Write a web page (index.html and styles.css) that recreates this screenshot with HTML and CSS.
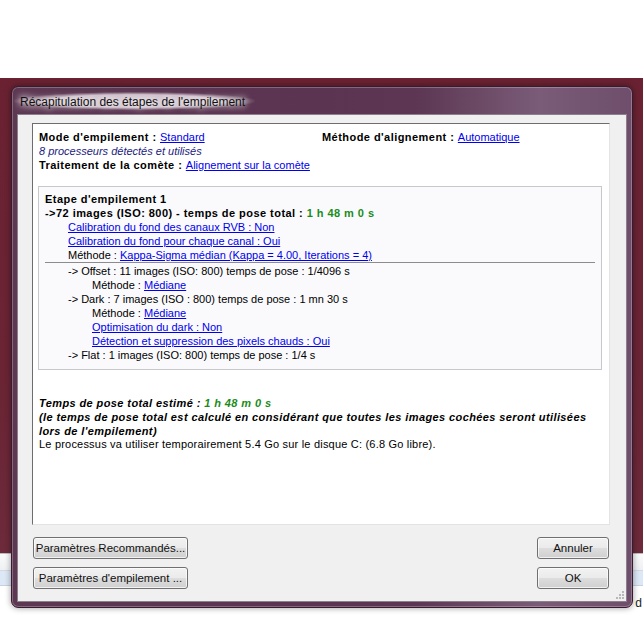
FILE: index.html
```html
<!DOCTYPE html>
<html lang="fr">
<head>
<meta charset="UTF-8" />
<title>Récapitulation des étapes de l'empilement</title>
<link rel="stylesheet" href="styles.css">
</head>
<body>
  <div class="desk">
    <div class="desk-top"></div>
    <div class="desk-maroon"></div>
    <div class="desk-app">
      <div class="app-line"></div>
      <div class="app-row"></div>
      <div class="app-blue"></div>
      <div class="app-row2"><span class="app-d">d</span></div>
    </div>
  </div>

  <div class="window" role="dialog" aria-label="Récapitulation des étapes de l'empilement">
    <div class="titlebar"><span class="title-text">Récapitulation des étapes de l'empilement</span></div>
    <div class="client">
      <div class="panel">
        <div class="head">
          <div><b>Mode d'empilement : </b><a href="#">Standard</a></div>
          <div><b>Méthode d'alignement : </b><a href="#">Automatique</a></div>
        </div>
        <div class="cpu">8 processeurs détectés et utilisés</div>
        <div><b>Traitement de la comète : </b><a href="#">Alignement sur la comète</a></div>

        <div class="stage">
          <div><b>Etape d'empilement 1</b></div>
          <div><b>-&gt;72 images (ISO: 800) - temps de pose total : <span class="green">1 h 48 m 0 s</span></b></div>
          <div class="lvl1"><a href="#">Calibration du fond des canaux RVB : Non</a></div>
          <div class="lvl1"><a href="#">Calibration du fond pour chaque canal : Oui</a></div>
          <div class="lvl1">Méthode : <a href="#">Kappa-Sigma médian (Kappa = 4.00, Iterations = 4)</a></div>
          <div class="sep"></div>
          <div class="lvl1">-&gt; Offset : 11 images (ISO: 800) temps de pose : 1/4096 s</div>
          <div class="lvl2">Méthode : <a href="#">Médiane</a></div>
          <div class="lvl1">-&gt; Dark : 7 images (ISO : 800) temps de pose : 1 mn 30 s</div>
          <div class="lvl2">Méthode : <a href="#">Médiane</a></div>
          <div class="lvl2"><a href="#">Optimisation du dark : Non</a></div>
          <div class="lvl2"><a href="#">Détection et suppression des pixels chauds : Oui</a></div>
          <div class="lvl1">-&gt; Flat : 1 images (ISO: 800) temps de pose : 1/4 s</div>
        </div>

        <div class="total">
          <div>Temps de pose total estimé : <span class="green">1 h 48 m 0 s</span></div>
          <div>(le temps de pose total est calculé en considérant que toutes les images cochées seront utilisées</div>
          <div>lors de l'empilement)</div>
        </div>
        <div class="disk">Le processus va utiliser temporairement 5.4 Go sur le disque C: (6.8 Go libre).</div>
      </div>

      <div class="buttons">
        <div class="btn-col">
          <button class="btn btn-wide">Paramètres Recommandés...</button>
          <button class="btn btn-wide">Paramètres d'empilement ...</button>
        </div>
        <div class="btn-col">
          <button class="btn btn-small">Annuler</button>
          <button class="btn btn-small">OK</button>
        </div>
      </div>
      <svg class="grip" width="10" height="10" viewBox="0 0 10 10">
        <rect x="7" y="1" width="2" height="2" fill="#b8b8b8"/>
        <rect x="4" y="4" width="2" height="2" fill="#b8b8b8"/>
        <rect x="7" y="4" width="2" height="2" fill="#b8b8b8"/>
        <rect x="1" y="7" width="2" height="2" fill="#b8b8b8"/>
        <rect x="4" y="7" width="2" height="2" fill="#b8b8b8"/>
        <rect x="7" y="7" width="2" height="2" fill="#b8b8b8"/>
      </svg>
    </div>
  </div>
</body>
</html>
```

FILE: styles.css
```css
body {
  margin: 0;
  width: 643px;
  height: 618px;
  overflow: hidden;
  position: relative;
  font-family: 'Liberation Sans', Arial, sans-serif;
  font-size: 11px;
  color: #000;
}
.desk {
  display: flex;
  flex-direction: column;
  height: 618px;
}
.desk-top {
  height: 78px;
  background: #fff;
}
.desk-maroon {
  height: 475px;
  background: linear-gradient(180deg, #6a2232, #6a2434 60%, #6c2a3a);
}
.desk-app {
  flex: 1;
  background: #fff;
  display: flex;
  flex-direction: column;
}
.app-line {
  height: 1px;
  background: #b9bcc2;
}
.app-row {
  height: 16px;
  background: linear-gradient(#fafafa, #eef0f3);
  border-bottom: 1px solid #d5d9df;
}
.app-blue {
  height: 14px;
  background: #dce8f6;
  border-bottom: 1px solid #c6d2e0;
}
.app-row2 {
  flex: 1;
  background: #fff;
  position: relative;
}
.app-d {
  position: absolute;
  right: 1px;
  top: 10px;
  font-size: 12px;
  color: #222;
}

.window {
  position: absolute;
  left: 11px;
  top: 86px;
  width: 620px;
  height: 520px;
  border: 1px solid #3a1a30;
  border-radius: 7px;
  background: linear-gradient(90deg, #5d3853 0%, #5a3450 50%, #5c3652 65%, #7a5c78 85%, #6e4e6a 100%);
  box-shadow: inset 0 0 0 1px rgba(255, 255, 255, 0.25), 0 0 6px rgba(0, 0, 0, 0.4);
  display: flex;
  flex-direction: column;
}
.titlebar {
  height: 27px;
  padding-left: 8px;
  display: flex;
  align-items: center;
}
.title-text {
  font-size: 12px;
  color: #111;
  padding: 3px 10px 1px 6px;
  margin-left: -6px;
  background: radial-gradient(ellipse at center, rgba(236, 226, 234, 0.8) 50%, rgba(236, 226, 234, 0) 72%);
  text-shadow: 0 0 6px #fff, 0 0 8px #fff;
  border-radius: 12px;
}
.client {
  flex: 1;
  margin: 0 5px 5px 5px;
  background: #f0f0f0;
  border: 1px solid #8e7f8c;
  position: relative;
  display: flex;
  flex-direction: column;
}
.panel {
  margin: 8px 16px 0 14px;
  height: 394px;
  background: #fff;
  border: 1px solid;
  border-color: #6d6d6d #e3e3e3 #e3e3e3 #6d6d6d;
  padding: 6px 6px 0 6px;
  line-height: 14px;
}
.panel b {
  letter-spacing: 0.45px;
}
.panel a {
  color: #0000ee;
  text-decoration: underline;
}
.head {
  display: grid;
  grid-template-columns: 283px auto;
}
.cpu {
  font-style: italic;
  color: #1b1b80;
}
.green {
  color: #1a8c1a;
}
.stage {
  margin: 14px 1px 0 -1px;
  background: #fafafd;
  border: 1px solid #c7c7cc;
  padding: 5px 6px 7px 6px;
}
.lvl1 {
  padding-left: 23px;
}
.lvl2 {
  padding-left: 47px;
}
.sep {
  height: 1px;
  background: #8c8c8c;
  margin: 0 0 1px 0;
}
.total {
  margin-top: 26px;
  font-weight: bold;
  font-style: italic;
  letter-spacing: 0.4px;
}
.disk {
  line-height: 12px;
  letter-spacing: 0.2px;
}
.buttons {
  display: flex;
  justify-content: space-between;
  padding: 12px 17px 0 15px;
}
.btn-col {
  display: flex;
  flex-direction: column;
  gap: 8px;
}
.btn {
  height: 22px;
  border: 1px solid #707070;
  border-radius: 3px;
  background: linear-gradient(#f2f2f2 0%, #ebebeb 48%, #dddddd 52%, #cfcfcf 100%);
  box-shadow: inset 0 0 0 1px rgba(255, 255, 255, 0.7);
  font-family: 'Liberation Sans', Arial, sans-serif;
  font-size: 11.5px;
  white-space: nowrap;
  color: #111;
  padding: 0;
}
.btn-wide {
  width: 155px;
}
.btn-small {
  width: 72px;
}
.grip {
  position: absolute;
  right: 1px;
  bottom: 1px;
}
```
